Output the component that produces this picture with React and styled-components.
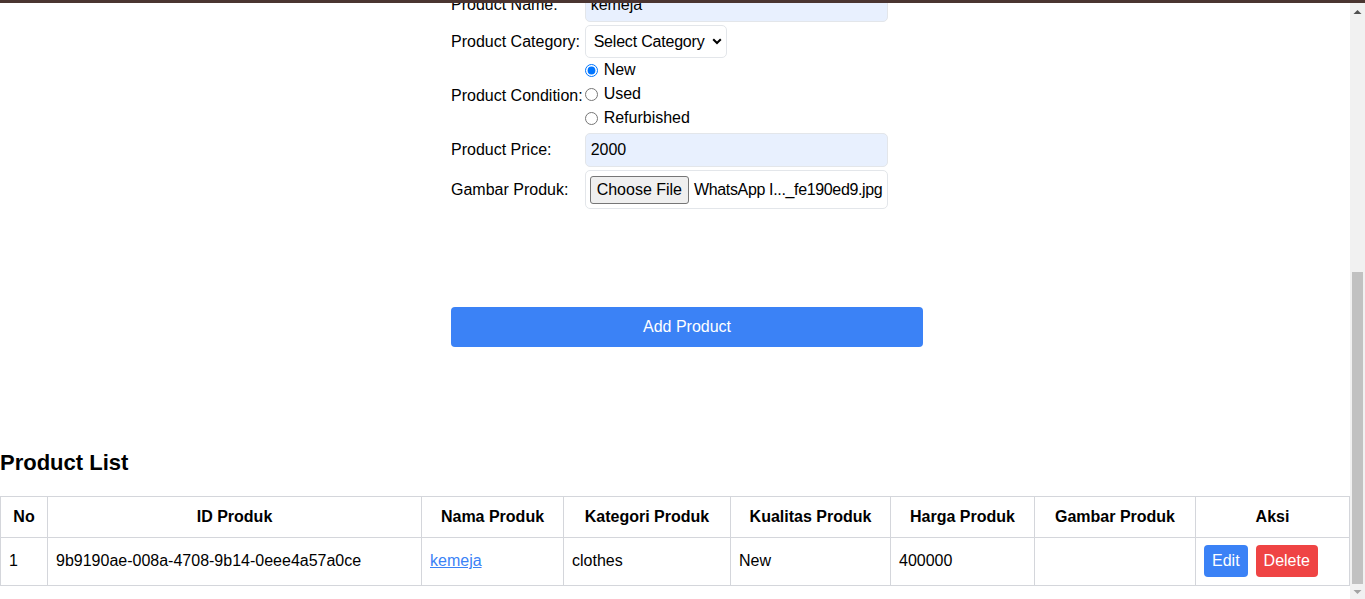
import React, { useLayoutEffect, useRef } from 'react';
import styled, { createGlobalStyle } from 'styled-components';

const GlobalStyle = createGlobalStyle`
  html, body {
    margin: 0;
    padding: 0;
    height: 100%;
    overflow: hidden;
  }
  body {
    font-family: "Liberation Sans", Arial, sans-serif;
    font-size: 16px;
    color: #000;
    background: #fff;
  }
  #root {
    height: 100%;
  }
  * {
    box-sizing: border-box;
  }
`;

const Frame = styled.div`
  height: 100%;
  display: flex;
  flex-direction: column;
`;

const TopBar = styled.div`
  height: 3px;
  flex-shrink: 0;
  background: #4a3531;
`;

const Viewport = styled.div`
  flex: 1;
  min-height: 0;
  display: flex;
`;

const Scroller = styled.div`
  flex: 1;
  min-width: 0;
  overflow: hidden;
`;

/* scrollbar tiruan, headless tidak menampilkan scrollbar */
const ScrollBar = styled.div`
  width: 15px;
  flex-shrink: 0;
  display: flex;
  flex-direction: column;
  background: #f1f1f1;
`;

const ScrollArrow = styled.svg`
  display: block;
  flex-shrink: 0;
`;

const ScrollTrack = styled.div`
  flex: 1;
  display: flex;
  flex-direction: column;
  justify-content: flex-end;
  padding: 0 2px;
`;

const ScrollThumb = styled.div`
  height: 312px;
  background: #c1c1c1;
`;

const Intro = styled.header`
  height: 430px;
  display: flex;
  flex-direction: column;
  align-items: center;
  justify-content: center;
  gap: 12px;
`;

const PageTitle = styled.h1`
  margin: 0;
  font-size: 32px;
`;

const PageText = styled.p`
  margin: 0;
  color: #555;
`;

const FormSection = styled.section`
  padding: 40px 0 82px;
`;

const FormBox = styled.form`
  width: 472px;
  margin-left: calc(50% - 224px);
`;

const FieldGrid = styled.div`
  display: grid;
  grid-template-columns: max-content 303px;
  column-gap: 2px;
  row-gap: 3px;
`;

const Label = styled.label`
  align-self: center;
  line-height: 20px;
`;

const TextInput = styled.input`
  width: 303px;
  height: 34px;
  padding: 0 5px;
  border: 1px solid #e3e6ea;
  border-radius: 5px;
  background: #e8f0fe;
  font: inherit;
  color: #000;
  outline: none;
`;

const SelectWrap = styled.div`
  position: relative;
  width: 142px;
  height: 33px;
`;

const Select = styled.select`
  appearance: none;
  width: 100%;
  height: 100%;
  padding: 0 0 0 8px;
  border: 1px solid #e3e6ea;
  border-radius: 5px;
  background: #fff;
  font: inherit;
  letter-spacing: -0.2px;
  color: #000;
`;

const Chevron = styled.svg`
  position: absolute;
  right: 5px;
  top: 13px;
  pointer-events: none;
`;

const RadioGroup = styled.div`
  display: flex;
  flex-direction: column;
  height: 72px;
  margin-top: -3px;
`;

const RadioOption = styled.label`
  display: flex;
  align-items: center;
  height: 24px;
`;

const Radio = styled.input`
  width: 13px;
  height: 13px;
  margin: 0 6px 0 0;
`;

const FileBox = styled.div`
  width: 303px;
  height: 39px;
  display: flex;
  align-items: center;
  gap: 5px;
  padding: 0 4px;
  border: 1px solid #e3e6ea;
  border-radius: 5px;
  overflow: hidden;
  white-space: nowrap;
`;

const FileButton = styled.span`
  height: 28px;
  display: inline-flex;
  align-items: center;
  padding: 0 6px;
  border: 1px solid #767676;
  border-radius: 3px;
  background: #efefef;
`;

const FileName = styled.span`
  letter-spacing: -0.35px;
`;

const SubmitButton = styled.button`
  display: block;
  width: 472px;
  height: 40px;
  margin-top: 98px;
  border: none;
  border-radius: 4px;
  background: #3b82f6;
  color: #fff;
  font: inherit;
`;

const ListSection = styled.section`
  padding-bottom: 13px;
`;

const ListTitle = styled.h2`
  margin: 20px 0 19px;
  font-size: 22px;
  line-height: 28px;
`;

const Table = styled.table`
  width: 100%;
  table-layout: fixed;
  border-collapse: collapse;
`;

const Th = styled.th`
  width: ${(p) => p.$w}px;
  padding: 8px;
  border: 1px solid #d4d6db;
  line-height: 24px;
  font-weight: bold;
  text-align: center;
`;

const Td = styled.td`
  padding: 7px 8px 8px;
  border: 1px solid #d4d6db;
  line-height: 24px;
  white-space: nowrap;
`;

const ProductLink = styled.a`
  color: #3b82f6;
  text-decoration: underline;
`;

const Actions = styled.div`
  display: flex;
  gap: 8px;
`;

const ActionButton = styled.button`
  height: 32px;
  padding: 0 8px;
  border: none;
  border-radius: 4px;
  background: ${(p) => (p.$danger ? '#ef4444' : '#3b82f6')};
  color: #fff;
  font: inherit;
`;

const columns = [
  { title: 'No', w: 47 },
  { title: 'ID Produk', w: 374 },
  { title: 'Nama Produk', w: 142 },
  { title: 'Kategori Produk', w: 167 },
  { title: 'Kualitas Produk', w: 160 },
  { title: 'Harga Produk', w: 144 },
  { title: 'Gambar Produk', w: 161 },
  { title: 'Aksi', w: 154 },
];

const products = [
  {
    id: '9b9190ae-008a-4708-9b14-0eee4a57a0ce',
    name: 'kemeja',
    category: 'clothes',
    condition: 'New',
    price: 400000,
  },
];

const ProductForm = () => {
  return (
    <FormBox onSubmit={(e) => e.preventDefault()}>
      <FieldGrid>
        <Label htmlFor="name">Product Name:</Label>
        <TextInput id="name" defaultValue="kemeja" />

        <Label htmlFor="category">Product Category:</Label>
        <SelectWrap>
          <Select id="category" defaultValue="">
            <option value="">Select Category</option>
            <option value="clothes">clothes</option>
          </Select>
          <Chevron width="10" height="7" viewBox="0 0 10 7">
            <polyline points="1.2,1.2 5,5 8.8,1.2" fill="none" stroke="#000" strokeWidth="2" />
          </Chevron>
        </SelectWrap>

        <Label>Product Condition:</Label>
        <RadioGroup>
          {['New', 'Used', 'Refurbished'].map((c) => (
            <RadioOption key={c}>
              <Radio type="radio" name="condition" defaultChecked={c === 'New'} />
              {c}
            </RadioOption>
          ))}
        </RadioGroup>

        <Label htmlFor="price">Product Price:</Label>
        <TextInput id="price" defaultValue="2000" />

        <Label>Gambar Produk:</Label>
        <FileBox>
          <FileButton>Choose File</FileButton>
          <FileName>WhatsApp I..._fe190ed9.jpg</FileName>
        </FileBox>
      </FieldGrid>
      <SubmitButton type="submit">Add Product</SubmitButton>
    </FormBox>
  );
};

const ProductList = () => {
  return (
    <ListSection>
      <ListTitle>Product List</ListTitle>
      <Table>
        <thead>
          <tr>
            {columns.map((c) => (
              <Th key={c.title} $w={c.w}>{c.title}</Th>
            ))}
          </tr>
        </thead>
        <tbody>
          {products.map((p, i) => (
            <tr key={p.id}>
              <Td>{i + 1}</Td>
              <Td>{p.id}</Td>
              <Td><ProductLink href="#">{p.name}</ProductLink></Td>
              <Td>{p.category}</Td>
              <Td>{p.condition}</Td>
              <Td>{p.price}</Td>
              <Td></Td>
              <Td>
                <Actions>
                  <ActionButton>Edit</ActionButton>
                  <ActionButton $danger>Delete</ActionButton>
                </Actions>
              </Td>
            </tr>
          ))}
        </tbody>
      </Table>
    </ListSection>
  );
};

const FakeScrollbar = () => (
  <ScrollBar>
    <ScrollArrow width="15" height="15" viewBox="0 0 15 15">
      <polygon points="3.5,11 7.5,7 11.5,11" fill="#505050" />
    </ScrollArrow>
    <ScrollTrack>
      <ScrollThumb />
    </ScrollTrack>
    <ScrollArrow width="15" height="15" viewBox="0 0 15 15">
      <polygon points="3.5,6 11.5,6 7.5,10" fill="#a3a3a3" />
    </ScrollArrow>
  </ScrollBar>
);

export default function App() {
  const scrollRef = useRef(null);

  // halaman sudah di-scroll ke bawah
  useLayoutEffect(() => {
    const el = scrollRef.current;
    if (el) el.scrollTop = el.scrollHeight;
  }, []);

  return (
    <>
      <GlobalStyle />
      <Frame>
        <TopBar />
        <Viewport>
          <Scroller ref={scrollRef}>
            <Intro>
              <PageTitle>Create Product</PageTitle>
              <PageText>Fill in the form below to add a new product.</PageText>
            </Intro>
            <FormSection>
              <ProductForm />
            </FormSection>
            <ProductList />
          </Scroller>
          <FakeScrollbar />
        </Viewport>
      </Frame>
    </>
  );
}
